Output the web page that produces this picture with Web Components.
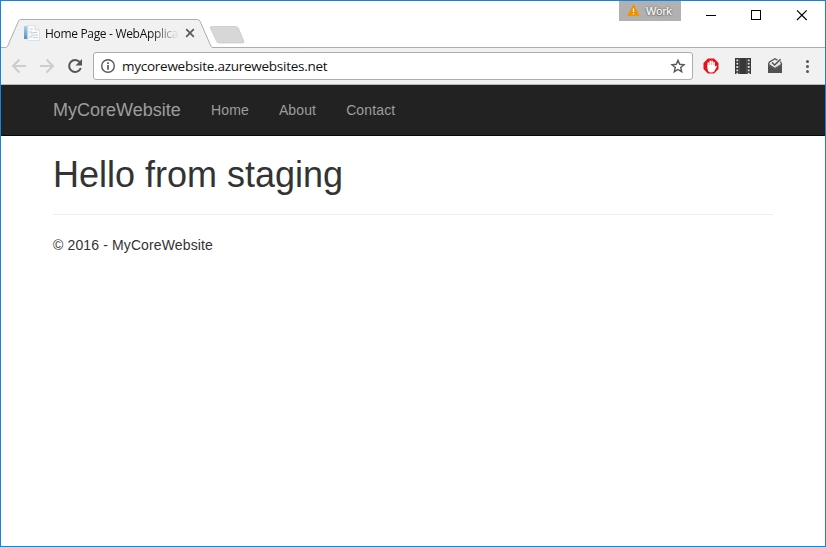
<!DOCTYPE html>
<html lang="en">
<head>
<meta charset="utf-8">
<title>Home Page - WebApplication</title>
<style>
html,body{margin:0;height:100%;overflow:hidden;background:#fff}
</style>
</head>
<body>
<browser-window>
  <title-bar slot="title">
    <browser-tab>Home Page - WebApplica</browser-tab>
    <profile-badge slot="profile">Work</profile-badge>
  </title-bar>
  <tool-bar slot="toolbar">mycorewebsite.azurewebsites.net</tool-bar>
  <site-nav>
    <span slot="brand">MyCoreWebsite</span>
    <nav-link>Home</nav-link><nav-link>About</nav-link><nav-link>Contact</nav-link>
  </site-nav>
  <site-content>
    <span slot="heading">Hello from staging</span>
    <span slot="footer">© 2016 - MyCoreWebsite</span>
  </site-content>
</browser-window>
<script>
const define = (name, html) => customElements.define(name, class extends HTMLElement {
  constructor() {
    super();
    this.attachShadow({mode: 'open'}).innerHTML = html;
  }
});

define('browser-window', `
<style>
:host{display:flex;flex-direction:column;box-sizing:border-box;width:826px;height:547px;border:1px solid #1883d7;background:#fff;overflow:hidden}
</style>
<slot name="title"></slot><slot name="toolbar"></slot><slot></slot>`);

define('title-bar', `
<style>
:host{display:grid;height:47px;flex:none;grid-template-columns:1fr auto auto}
.frame{grid-area:1/1/2/4;display:block}
.tabs{grid-area:1/1;padding-top:18px;display:flex}
.profile{grid-area:1/2;margin-right:7px}
.controls{grid-area:1/3;display:block}
</style>
<svg class="frame" width="824" height="47" viewBox="1 1 824 47">
  <path d="M1 47.5H5.5Q7 47.5 7.7 46L18.3 21.5Q19.2 19.5 21 19.5H197.5Q199.3 19.5 200.2 21.5L210.8 46Q211.5 47.5 213 47.5H825V48H1Z" fill="#f1f1f1"/>
  <path d="M1 47.5H5.5Q7 47.5 7.7 46L18.3 21.5Q19.2 19.5 21 19.5H197.5Q199.3 19.5 200.2 21.5L210.8 46Q211.5 47.5 213 47.5H825" fill="none" stroke="#adadad"/>
  <path d="M211.5 26.5H235.5Q237.5 26.5 238.3 28L243.8 41Q244.5 43 242.5 43H219.5Q217.5 43 216.7 41.5L210.5 28.5Q209.7 26.5 211.5 26.5Z" fill="#d7d7d7" stroke="#c5c5c5" stroke-width=".7"/>
</svg>
<div class="tabs"><slot></slot></div>
<div class="profile"><slot name="profile"></slot></div>
<svg class="controls" width="137" height="30" viewBox="688 1 137 30" fill="none" stroke="#000">
  <path d="M706 15.5H716"/><rect x="751.5" y="10.5" width="9" height="9"/><path d="M797 10.3L806.7 20M806.7 10.3L797 20" stroke-width="1.15"/>
</svg>`);

define('browser-tab', `
<style>
:host{display:flex;align-items:center;height:28px;padding-left:23px;font:12px/28px "Open Sans","Noto Sans",sans-serif;color:#111}
.icon{margin-right:5px;flex:none}
.label{width:134px;height:28px;padding-top:2px;overflow:hidden;white-space:nowrap;letter-spacing:-.32px;-webkit-mask-image:linear-gradient(90deg,#000 106px,transparent 134px);mask-image:linear-gradient(90deg,#000 106px,transparent 134px)}
.close{margin-left:6px;flex:none}
</style>
<svg class="icon" width="16" height="16" viewBox="0 0 16 16">
  <defs><linearGradient id="b" x2="0" y2="1"><stop stop-color="#aed3ea"/><stop offset="1" stop-color="#4d91c4"/></linearGradient></defs>
  <path d="M4 .5H11L15.5 5V15.5H4Z" fill="#fbfcfd" stroke="#d5dde2" stroke-width=".8"/>
  <rect y="1" width="3.3" height="13" fill="url(#b)"/>
  <path d="M11 .5V5H15.5" fill="#eef2f5" stroke="#c9d2d8" stroke-width=".7"/>
  <path d="M5 7H8V12H5M6 4H9M9 10H14M9 12.5H14M9 7.5H13" stroke="#c5cfd5" fill="none" stroke-width="1"/>
</svg>
<div class="label"><slot></slot></div>
<svg class="close" width="10" height="10" viewBox="0 0 10 10"><path d="M1.2 1.2L8.8 8.8M8.8 1.2L1.2 8.8" stroke="#5a5a5a" stroke-width="1.7"/></svg>`);

define('profile-badge', `
<style>
:host{display:flex;align-items:center;box-sizing:border-box;width:62px;height:20px;padding-left:8px;gap:6px;background:#b1b1b1;color:#fff;font:11px/20px "Liberation Sans",Arial,sans-serif;letter-spacing:.1px;-webkit-text-stroke:.25px #fff;text-shadow:0 0 2px #555,0 0 1px #555,0 1px 1px #666}
svg{margin-top:-3px}
</style>
<svg width="13" height="12" viewBox="0 0 13 12"><path d="M6.5 .8L12 11.3H1Z" fill="#f29100" stroke="#f29100" stroke-linejoin="round"/><path d="M6.5 4.5V8M6.5 9V10.2" stroke="#fff" stroke-width="1.2"/></svg>
<slot></slot>`);

define('tool-bar', `
<style>
:host{display:grid;grid-template-columns:92px 600px 1fr;box-sizing:border-box;height:37px;flex:none;background:#f1f1f1;border-bottom:1px solid #b6b9b6}
svg{display:block}
.url{box-sizing:border-box;height:28px;margin-top:4px;display:flex;align-items:center;border:1px solid #acacac;border-radius:3px;background:#fff;padding:0 6px;font:13.5px/26px "Open Sans","Noto Sans",sans-serif;color:#111}
.text{flex:1;margin-left:6px;white-space:nowrap;letter-spacing:-.26px}
</style>
<svg width="92" height="36" viewBox="1 48 92 36" fill="none" stroke="#cdcdcd" stroke-width="2">
  <path d="M26 66H13M19.5 59.5L13 66L19.5 72.5M40 66H53M46.5 59.5L53 66L46.5 72.5"/>
  <path d="M79.8 62.2A6 6 0 1 0 80.8 68" stroke="#555"/><path d="M82 59V65.5H75.5Z" fill="#555" stroke="none"/>
</svg>
<div class="url">
  <svg width="16" height="16" viewBox="0 0 16 16"><circle cx="8" cy="8" r="6.3" fill="none" stroke="#585858" stroke-width="1.4"/><path d="M8 4.2V5.9M8 7V11.8" stroke="#585858" stroke-width="1.7"/></svg>
  <span class="text"><slot></slot></span>
  <svg width="16" height="16" viewBox="0 0 16 16"><path d="M8 2.3L9.7 6.3L14 6.7L10.7 9.500L11.7 13.700L8 11.500L4.300 13.700L5.300 9.500L2 6.700L6.300 6.300Z" fill="none" stroke="#585858" stroke-width="1.4"/></svg>
</div>
<svg width="132" height="36" viewBox="693 48 132 36">
  <path d="M707.9 58.5H714.1L718.5 62.9V69.1L714.1 73.5H707.9L703.5 69.1V62.9Z" fill="#e61316"/>
  <g stroke="#fff" stroke-width="1.6" stroke-linecap="round" fill="none"><path d="M708.3 63V68M710.2 61.3V67M712.1 61.3V67M714 62.6V68"/></g>
  <path d="M707.5 65H714.8V67L716 65.8Q717.2 65.4 716.8 66.7L714.3 71.2Q713.5 72.4 711.3 72.4Q709 72.4 708.1 70.9Q707.4 69.3 707.5 65Z" fill="#fff"/>
  <rect x="735" y="58" width="16" height="16" fill="#383838"/>
  <path d="M737.3 59.500V74M748.700 59.500V74" stroke="#e4e4e4" stroke-width="1.8" stroke-dasharray="1.8 1.5"/>
  <path d="M739.500 58V74M746.500 58V74" stroke="#606060" stroke-width=".6"/>
  <path d="M768 64L775 68.600L782 64V73H768Z" fill="#515151"/>
  <path d="M768 64.500L775 59L782 64.500L775 69Z" fill="#e9e9e9"/>
  <path d="M768.500 64.200L769.500 62L775 58.800L777.500 60.200M768.300 64.300L775 68.600L781.700 64.300" fill="none" stroke="#515151" stroke-width="1.300"/>
  <path d="M772 62.500L774.700 65L780.600 59.300" fill="none" stroke="#515151" stroke-width="1.500"/>
  <path d="M780.300 61.500L781.900 64.500" stroke="#515151" stroke-width="1.200"/>
  <g fill="#555"><circle cx="807.5" cy="61.5" r="1.5"/><circle cx="807.5" cy="66.5" r="1.5"/><circle cx="807.5" cy="71.5" r="1.5"/></g>
</svg>`);

define('site-nav', `
<style>
:host{display:flex;align-items:center;box-sizing:border-box;height:51px;flex:none;background:#222;border-bottom:1px solid #080808;padding-left:52px;color:#9d9d9d;font:14px/20px "Liberation Sans",Arial,sans-serif}
.brand{font-size:18px;margin-right:30px;width:128px;white-space:nowrap}
.links{display:flex;gap:30px}
</style>
<div class="brand"><slot name="brand"></slot></div><div class="links"><slot></slot></div>`);

define('nav-link', `<style>:host{display:block;letter-spacing:.13px}</style><slot></slot>`);

define('site-content', `
<style>
:host{display:block;padding:19px 52px;color:#333;font:14px/20px "Liberation Sans",Arial,sans-serif}
h1{font-size:36px;font-weight:400;line-height:39px;margin:0 0 20px}
hr{margin:0 0 20px;border:0;border-top:1px solid #eee}
p{margin:0;letter-spacing:.13px}
</style>
<h1><slot name="heading"></slot></h1><hr><p><slot name="footer"></slot></p>`);
</script>
</body>
</html>
